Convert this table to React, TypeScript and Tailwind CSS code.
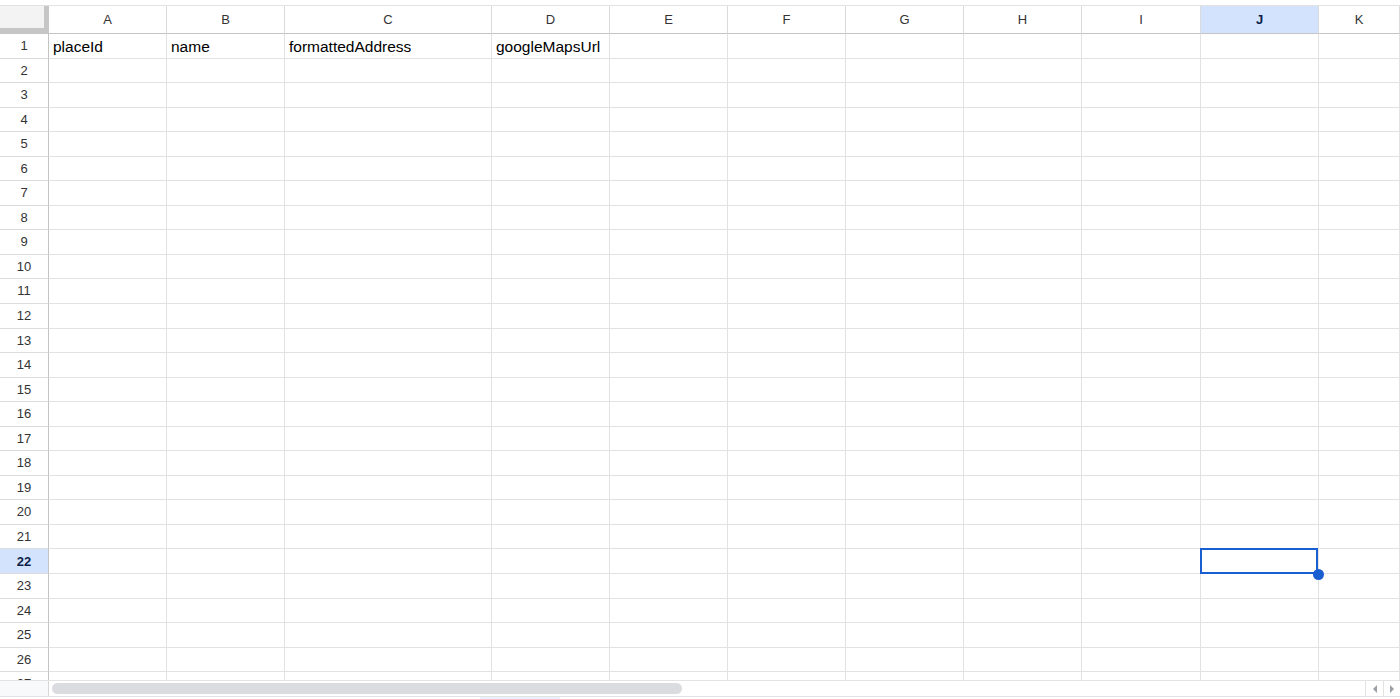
import { Fragment } from "react";

const columns = ["A", "B", "C", "D", "E", "F", "G", "H", "I", "J", "K"];
const headerCells: Record<string, string> = {
  A: "placeId",
  B: "name",
  C: "formattedAddress",
  D: "googleMapsUrl",
};
const rows = Array.from({ length: 27 }, (_, i) => i + 1);

export default function App() {
  return (
    <div className="flex h-[699px] w-[1400px] flex-col overflow-hidden bg-white font-['Liberation_Sans',Arial,sans-serif] text-[#202124]">
      <div className="h-[6px] shrink-0 border-b border-[#e3e3e3]" />

      <div className="min-h-0 flex-1 overflow-hidden">
        <div className="grid grid-cols-[49px_118px_118px_207px_118px_118px_118px_118px_118px_119px_118px_1fr] grid-rows-[28px] auto-rows-[24.56px]">
          {/* corner */}
          <div className="border-r-[5px] border-b-[6px] border-[#c6c6c6] bg-[#f3f3f3]" />
          {columns.map((col) => (
            <div
              key={`head-${col}`}
              className={`flex items-center justify-center border-r border-b border-r-[#dadada] border-b-[#c4c4c4] text-[13px] ${
                col === "J" ? "bg-[#d3e3fd] font-bold text-[#0b1f4a]" : "bg-white text-[#333]"
              }`}
            >
              {col}
            </div>
          ))}

          {rows.map((row) => (
            <Fragment key={`row-${row}`}>
              <div
                className={`flex items-center justify-center border-r border-b border-r-[#c4c4c4] border-b-[#dcdcdc] text-[13px] ${
                  row === 22 ? "bg-[#d3e3fd] font-bold text-[#0b1f4a]" : "bg-white text-[#333]"
                }`}
              >
                {row}
              </div>
              {columns.map((col) => (
                <div
                  key={`cell-${row}-${col}`}
                  className="relative flex items-end border-r border-b border-[#e2e2e2] pb-[2px] pl-[4px] text-[15.5px] leading-[18px] text-black"
                >
                  {row === 1 ? headerCells[col] : null}
                  {row === 22 && col === "J" && (
                    <>
                      <div className="absolute -top-px -left-px right-0 -bottom-px z-10 border-2 border-[#1a5fd2]" />
                      <div className="absolute -right-[6px] -bottom-[7px] z-20 h-[11px] w-[11px] rounded-full bg-[#1a5fd2]" />
                    </>
                  )}
                </div>
              ))}
            </Fragment>
          ))}
        </div>
      </div>

      {/* horizontal scrollbar */}
      <div className="flex h-[17px] shrink-0 border-t border-b border-[#e3e3e3] bg-white">
        <div className="w-[49px] shrink-0 border-r border-[#d6d6d6] bg-[#f8f9fa]" />
        <div className="flex flex-1 items-center pl-[3px]">
          <div className="h-[11px] w-[630px] rounded-full bg-[#dadce0]" />
        </div>
        <div className="flex w-[35px] shrink-0">
          <div className="flex w-[18px] items-center justify-center border-l border-[#e3e3e3]">
            <div className="h-0 w-0 border-y-[4px] border-r-[4px] border-y-transparent border-r-[#9aa0a6]" />
          </div>
          <div className="flex flex-1 items-center justify-center border-l border-[#e3e3e3]">
            <div className="h-0 w-0 border-y-[4px] border-l-[4px] border-y-transparent border-l-[#9aa0a6]" />
          </div>
        </div>
      </div>
      <div className="flex h-[2px] shrink-0 bg-white">
        <div className="ml-[480px] w-[80px] bg-[#e8f0fe]" />
      </div>
    </div>
  );
}
